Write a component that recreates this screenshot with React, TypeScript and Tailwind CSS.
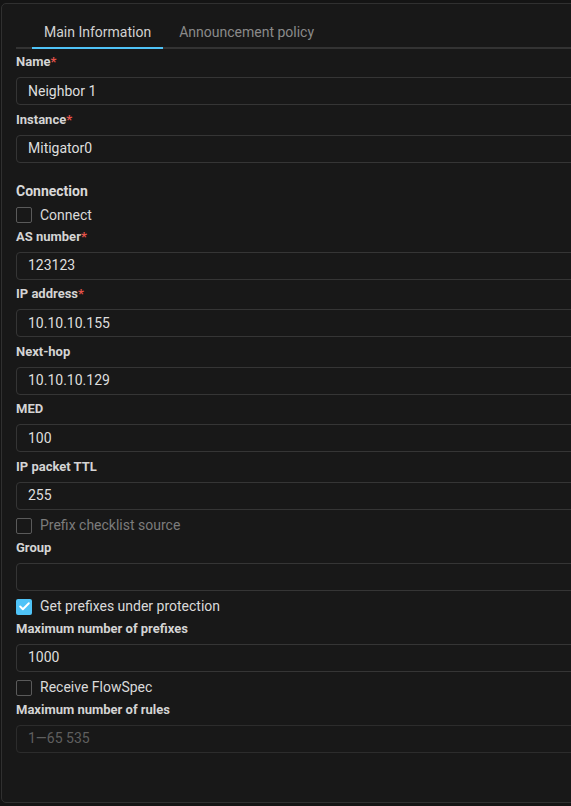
import { Check } from "lucide-react";

type Field = {
  label: string;
  value?: string;
  placeholder?: string;
  required?: boolean;
  disabled?: boolean;
};

function Label({ text, required }: { text: string; required?: boolean }) {
  return (
    <div className="h-[17px] text-[13px] font-bold leading-[17px] text-[#d4d4d4]">
      {text}
      {required && <span className="text-[#e5534b]">*</span>}
    </div>
  );
}

function TextField({ label, value, placeholder, required, disabled }: Field) {
  return (
    <div className="flex flex-col">
      <Label text={label} required={required} />
      <div
        className={
          disabled
            ? "mt-[7px] flex h-[28px] items-center rounded-[4px] border border-[#2c2c2c] px-[11px] text-[14px] text-[#5f5f5f]"
            : "mt-[7px] flex h-[28px] items-center rounded-[4px] border border-[#353535] px-[11px] text-[14px] text-[#dedede]"
        }
      >
        {value ?? placeholder ?? ""}
      </div>
    </div>
  );
}

function CheckRow({
  label,
  checked,
  muted,
  tight,
}: {
  label: string;
  checked?: boolean;
  muted?: boolean;
  tight?: boolean;
}) {
  return (
    <div
      className={
        tight
          ? "flex h-[25px] items-center gap-[8px]"
          : "flex h-[26px] items-center gap-[8px]"
      }
    >
      {checked ? (
        <div className="grid h-[16px] w-[16px] place-items-center rounded-[2px] bg-[#4fc3f7]">
          <Check size={13} strokeWidth={3.5} className="text-white" />
        </div>
      ) : (
        <div className="h-[16px] w-[16px] rounded-[2px] border border-[#5a5a5a]" />
      )}
      <span
        className={
          muted
            ? "text-[14px] text-[#7c7c7c]"
            : "text-[14px] text-[#dadada]"
        }
      >
        {label}
      </span>
    </div>
  );
}

export default function App() {
  return (
    <div
      className="h-[806px] w-[571px] overflow-hidden bg-[#141414] pl-[1px] pt-[3px]"
      style={{ fontFamily: "Roboto, 'Liberation Sans', sans-serif" }}
    >
      <div className="h-[800px] w-[640px] rounded-[5px] border border-[#303030] bg-[#181818] pl-[14px]">
        <div className="flex h-[45px] items-end border-b-2 border-[#333333]">
          <div className="-mb-[2px] ml-4 flex">
            <div className="border-b-2 border-[#4fc3f7] px-3 pb-[5px] text-[14px] leading-[20px] text-[#d2d2d2]">
              Main Information
            </div>
            <div className="ml-1 px-3 pb-[5px] text-[14px] leading-[20px] text-[#8a8a8a]">
              Announcement policy
            </div>
          </div>
        </div>

        <div className="flex flex-col pt-[4px]">
          <div className="flex flex-col gap-[5.5px]">
            <TextField label="Name" value="Neighbor 1" required />
            <TextField label="Instance" value="Mitigator0" required />
          </div>

          <div className="mt-[17px] h-[23px] text-[14px] font-bold leading-[23px] text-[#d8d8d8]">
            Connection
          </div>
          <CheckRow label="Connect" tight />

          <div className="flex flex-col gap-[5.5px]">
            <TextField label="AS number" value="123123" required />
            <TextField label="IP address" value="10.10.10.155" required />
            <TextField label="Next-hop" value="10.10.10.129" />
            <TextField label="MED" value="100" />
            <TextField label="IP packet TTL" value="255" />
          </div>

          <div className="mt-[3px]">
            <CheckRow label="Prefix checklist source" muted />
          </div>
          <TextField label="Group" value="" />

          <div className="mt-[3px]">
            <CheckRow label="Get prefixes under protection" checked />
          </div>
          <TextField label="Maximum number of prefixes" value="1000" />

          <div className="mt-[3px]">
            <CheckRow label="Receive FlowSpec" />
          </div>
          <TextField
            label="Maximum number of rules"
            placeholder="1—65 535"
            disabled
          />
        </div>
      </div>
    </div>
  );
}
